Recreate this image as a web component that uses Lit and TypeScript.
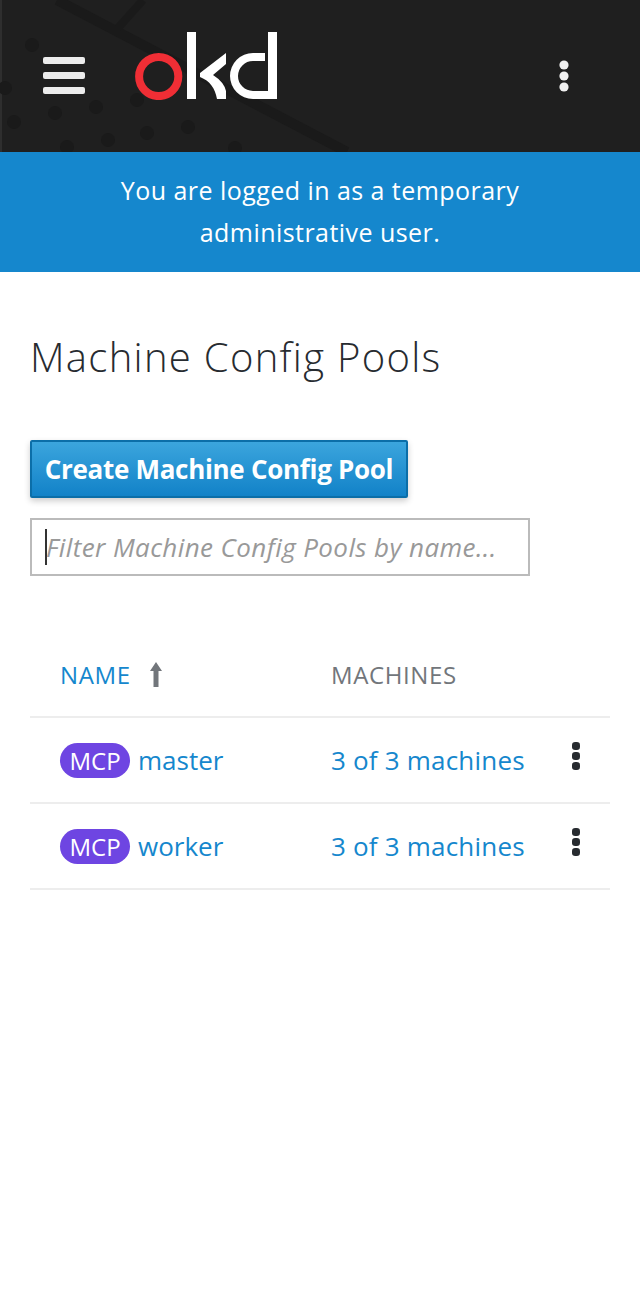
import { LitElement, html, css, svg } from "lit";
import { customElement } from "lit/decorators.js";

const dots: [number, number][] = [[32,45],[5,88],[14,122],[55,113],[96,107],[137,100],[188,127],[108,140],[147,133],[67,147],[235,148]];

@customElement("app-root")
export class AppRoot extends LitElement {
  static styles = css`
    :host { display: block; background: #fff; min-height: 1306px; font-family: "Open Sans", "Liberation Sans", sans-serif; color: #272b30; }
    .masthead { position: relative; height: 152px; background: #1f1f1f; overflow: hidden; display: flex; align-items: center; padding: 0 71px 0 43px; box-sizing: border-box; }
    .bg { position: absolute; inset: 0; }
    .burger, .logo, .kebab { position: relative; display: block; flex: none; }
    .burger { margin-right: 50px; }
    .logo { margin-right: auto; margin-top: -20px; }
    .banner { height: 120px; box-sizing: border-box; background: #1587cd; color: #fff; text-align: center; font-size: 25px; letter-spacing: .45px; line-height: 42px; padding: 17px 100px 0; }
    main { padding: 0 30px; }
    h1 { margin: 0; padding-top: 59px; font-size: 40px; letter-spacing: 1.3px; line-height: 52px; font-weight: 300; color: #272b30; white-space: nowrap; }
    .btn { display: block; margin-top: 57px; width: 378px; height: 58px; box-sizing: border-box; border: 2px solid #0b6ea8; border-radius: 2px; background: linear-gradient(#3ba5dd, #1282c8); color: #fff; font: 700 26px/54px "Open Sans", sans-serif; letter-spacing: -.3px; text-align: center; padding: 0; box-shadow: 0 3px 6px rgba(0,0,0,.2); white-space: nowrap; }
    .filter { display: flex; align-items: center; margin-top: 20px; width: 500px; height: 58px; box-sizing: border-box; border: 2px solid #bbb; padding-left: 13px; font-size: 26px; letter-spacing: .4px; font-style: italic; color: #999; white-space: nowrap; }
    .caret { width: 2px; height: 36px; background: #333; margin-right: -1px; }
    .row { display: grid; grid-template-columns: 271px 1fr 64px; align-items: center; border-bottom: 2px solid #ededed; box-sizing: border-box; height: 86px; padding-left: 30px; font-size: 26px; }
    .head { margin-top: 57px; height: 85px; font-size: 24px; letter-spacing: .6px; color: #72767b; padding-bottom: 0; }
    .sort { display: flex; align-items: center; gap: 19px; color: #1587cd; }
    a { color: #1587cd; text-decoration: none; white-space: nowrap; }
    .machines { letter-spacing: .2px; }
    .name { display: flex; align-items: center; gap: 8px; }
    .mcp { background: #6e45e2; color: #fff; border-radius: 18px; width: 70px; height: 35px; line-height: 35px; text-align: center; font-size: 24px; }
    .act { display: block; justify-self: center; margin-top: -9px; margin-left: -4px; }
  `;

  kebab(fill: string) {
    return html`<svg class="act" width="10" height="28" viewBox="0 0 10 28"><g fill=${fill}><rect x="1" y="0" width="8" height="8" rx="3.2"/><rect x="1" y="10" width="8" height="8" rx="3.2"/><rect x="1" y="20" width="8" height="8" rx="3.2"/></g></svg>`;
  }

  row(name: string) {
    return html`<div class="row">
      <div class="name"><span class="mcp">MCP</span><a>${name}</a></div>
      <a class="machines">3 of 3 machines</a>
      ${this.kebab("#272b30")}
    </div>`;
  }

  render() {
    return html`
      <div class="masthead">
        <svg class="bg" width="640" height="152" viewBox="0 0 640 152">
          <g fill="none" stroke="#1a1a1a">
            <path d="M57 0 L347 152" stroke-width="10"/>
            <path d="M143 0 L118 28" stroke-width="8"/>
            <path d="M1 0 V152" stroke="#2e2e2e" stroke-width="2"/>
          </g>
          <g fill="#1a1a1a">${dots.map(([x, y]) => svg`<circle cx=${x} cy=${y} r="7"/>`)}</g>
        </svg>
        <svg class="burger" width="42" height="38" viewBox="0 0 42 38">
          <g fill="#ececec"><rect width="42" height="7" rx="2"/><rect y="15" width="42" height="7" rx="2"/><rect y="30" width="42" height="7" rx="2"/></g>
        </svg>
        <svg class="logo" width="144" height="68" viewBox="136 32 144 68">
          <circle cx="159.7" cy="76.5" r="19.6" fill="none" stroke="#f02e35" stroke-width="8"/>
          <g fill="#fff">
            <rect x="188" y="32" width="9" height="67"/>
            <path d="M227 53 V64 L214 75 Q225 82 227 91 V99 H218 C216 88 211 81 201 77 V73 Z"/>
            <rect x="269" y="32" width="9" height="67"/>
            <path d="M269 99 H254 A23 23 0 1 1 254 53 H266 V61 H254 A15 15 0 1 0 254 91 H269 Z"/>
          </g>
        </svg>
        <svg class="kebab" width="10" height="32" viewBox="0 0 10 32">
          <g fill="#f0f0f0"><circle cx="5" cy="5" r="4.6"/><circle cx="5" cy="16" r="4.6"/><circle cx="5" cy="27" r="4.6"/></g>
        </svg>
      </div>
      <div class="banner">You are logged in as a temporary administrative user.</div>
      <main>
        <h1>Machine Config Pools</h1>
        <button class="btn">Create Machine Config Pool</button>
        <div class="filter"><span class="caret"></span>Filter Machine Config Pools by name...</div>
        <div class="row head">
          <div class="sort">NAME
            <svg width="12" height="25" viewBox="0 0 12 25"><path d="M6 0 L12 9 H8.5 V25 H3.5 V9 H0 Z" fill="#72767b"/></svg>
          </div>
          <div>MACHINES</div>
          <div></div>
        </div>
        ${this.row("master")}
        ${this.row("worker")}
      </main>
    `;
  }
}
